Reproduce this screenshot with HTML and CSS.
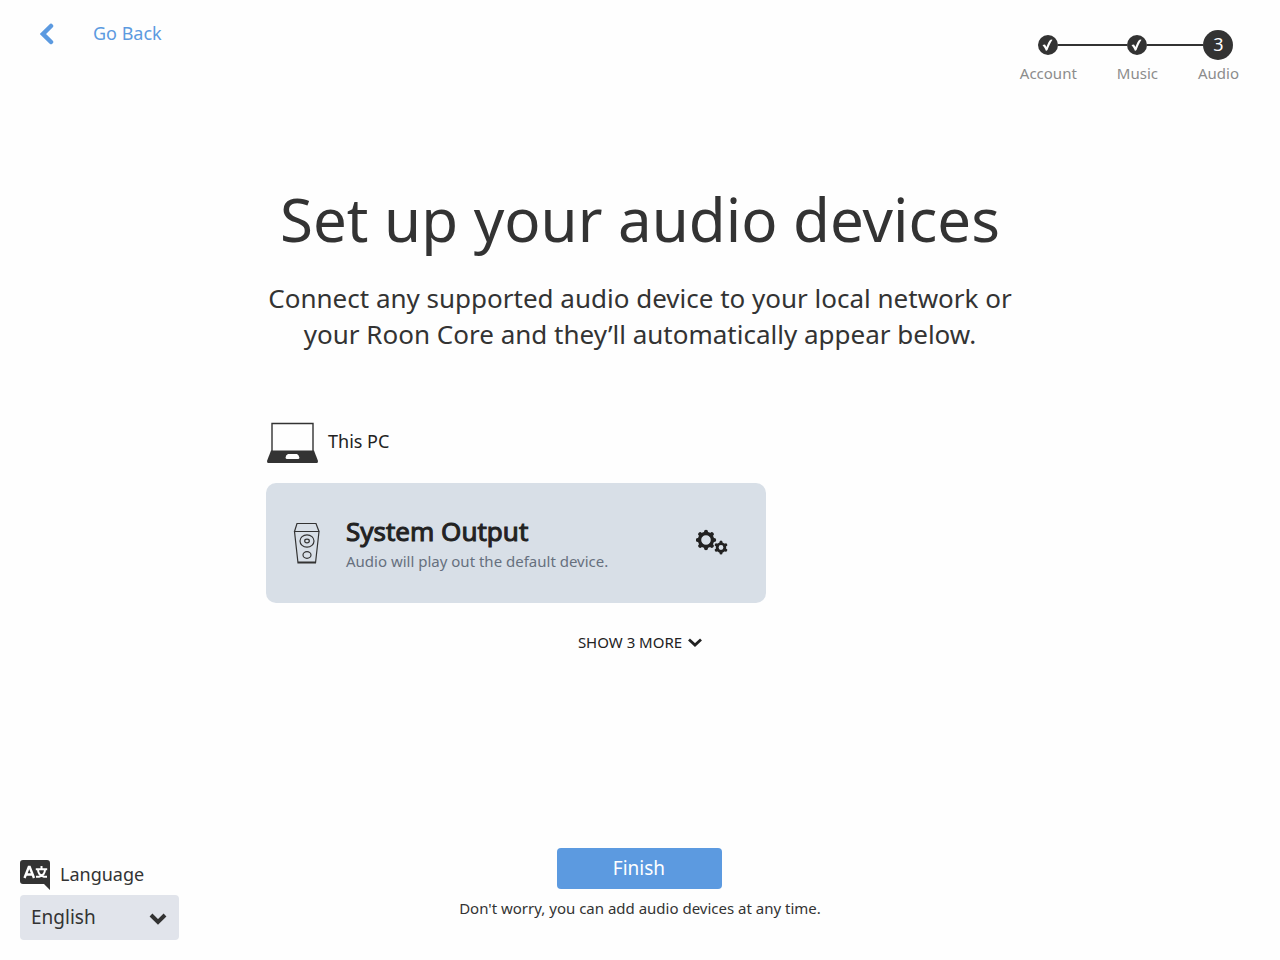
FILE: index.html
```html
<!DOCTYPE html>
<html lang="en">
<head>
<meta charset="utf-8">
<meta name="viewport" content="width=device-width, initial-scale=1">
<title>Set up your audio devices</title>
<link rel="stylesheet" href="styles.css">
</head>
<body>
<header class="topbar">
  <a class="back" href="#">
    <svg class="back-icon" width="14" height="24" viewBox="0 0 14 24" aria-hidden="true"><path d="M11 5 3 13l8 8" fill="none" stroke="currentColor" stroke-width="4.500" stroke-linecap="round"/></svg>
    <span>Go Back</span>
  </a>
  <ol class="steps">
    <li class="step">
      <span class="marker"><span class="dot"><svg width="20" height="20" viewBox="0 0 20 20" aria-hidden="true"><path d="M4.500 10 7 9.500 8.500 12C9.800 8.500 11 5.500 13 4.500l1.500.2C12.500 7.500 11 11 9.500 15L8 16C7 13.500 6 12 4.500 10z" fill="#fff"/></svg></span></span>
      <span>Account</span>
    </li>
    <li class="step">
      <span class="marker"><span class="dot"><svg width="20" height="20" viewBox="0 0 20 20" aria-hidden="true"><path d="M4.500 10 7 9.500 8.500 12C9.800 8.500 11 5.500 13 4.500l1.500.2C12.500 7.500 11 11 9.500 15L8 16C7 13.500 6 12 4.500 10z" fill="#fff"/></svg></span></span>
      <span>Music</span>
    </li>
    <li class="step" aria-current="step">
      <span class="marker"><span class="dot dot-current">3</span></span>
      <span>Audio</span>
    </li>
  </ol>
</header>

<main class="content">
  <h1 class="title">Set up your audio devices</h1>
  <p class="lead">Connect any supported audio device to your local network or your Roon Core and they’ll automatically appear below.</p>

  <section class="group">
    <h2 class="group-title">
      <svg width="52" height="42" viewBox="0 0 52 42" aria-hidden="true"><path d="M6 30V2.500h41V30" fill="none" stroke="#333" stroke-width="1.400"/><path d="M5 29.500h43L52 40q0 2-1 2H2q-1 0-1-2z" fill="#333"/><path d="M22 33h9q2 1 2.500 4l-1 1H20.500l-1-1q0-3 2.500-4z" fill="#fff"/></svg>
      <span>This PC</span>
    </h2>
    <article class="device">
      <svg width="28" height="42" viewBox="0 0 28 42" fill="none" stroke="#333" stroke-width="1.200" aria-hidden="true"><path d="M4 1.500h19l3 8H1.500zM1.500 9.500 5 41h17.500L26 9.500M5 40h17.500"/><ellipse cx="14" cy="19" rx="7" ry="6.200"/><ellipse cx="14" cy="19" rx="2.300" ry="1.800"/><ellipse cx="14" cy="33" rx="4" ry="3.400"/></svg>
      <div class="device-text">
        <h3 class="device-name">System Output</h3>
        <p class="device-note">Audio will play out the default device.</p>
      </div>
      <button class="icon-button" type="button" aria-label="Device settings">
        <svg width="32" height="28" viewBox="0 0 32 28" fill="none" stroke="#222" stroke-linecap="round" aria-hidden="true">
          <circle cx="10" cy="11" r="6.500" stroke-width="3.400"/>
          <path d="M10 4V2.800M10 18v1.200M3 11H1.800M17 11h1.200M5 6 4.200 5.200M15 16l.8.8M5 16l-.8.8M15 6l.8-.8" stroke-width="4"/>
          <circle cx="25" cy="18.500" r="3.800" stroke-width="2.800"/>
          <path d="M25 14v-1M25 23v1M21 16.200l-.8-.4M29 16.200l.8-.4M21 20.800l-.8.4M29 20.800l.8.4" stroke-width="3"/>
        </svg>
      </button>
    </article>
  </section>

  <button class="more" type="button">
    <span>SHOW 3 MORE</span>
    <svg width="14" height="10" viewBox="0 0 14 10" aria-hidden="true"><path d="m1 2.500 6 5.500 6-5.500" fill="none" stroke="#222" stroke-width="2.800"/></svg>
  </button>
</main>

<footer class="footer">
  <div class="language">
    <label class="language-label" for="language">
      <svg width="30" height="30" viewBox="0 0 30 30" aria-hidden="true"><path d="M3 0h24q3 0 3 3v27l-6-6H3q-3 0-3-3V3q0-3 3-3z" fill="#333"/><path d="M4.500 18 8.800 7h.9L14 18M6 14.500h6.500" fill="none" stroke="#fff" stroke-width="2.400"/><path d="M15.800 9.300h11.400M21.500 6v3M18 9.500c0 3 1.500 6 6 7.300h3M25 9.500c0 3-1.500 6-6 7.300h-3" fill="none" stroke="#fff" stroke-width="2"/></svg>
      <span>Language</span>
    </label>
    <div class="select-wrap">
      <select class="select" id="language"><option>English</option></select>
      <svg class="select-icon" width="18" height="12" viewBox="0 0 18 12" aria-hidden="true"><path d="m2 2 7 7 7-7" fill="none" stroke="#333" stroke-width="4"/></svg>
    </div>
  </div>
  <div class="finish">
    <button class="primary" type="button">Finish</button>
    <p class="finish-note">Don't worry, you can add audio devices at any time.</p>
  </div>
</footer>
</body>
</html>
```

FILE: styles.css
```css
* { box-sizing: border-box; }

body {
  margin: 0;
  min-height: 100vh;
  display: flex;
  flex-direction: column;
  background: #fefefe;
  color: #333;
  font-family: "Noto Sans", "Open Sans", sans-serif;
}

h1, h2, h3, p, ol { margin: 0; padding: 0; font-weight: 400; }
svg { display: block; flex: none; }
button, select { font: inherit; color: inherit; border: 0; cursor: pointer; }

.topbar {
  display: flex;
  justify-content: space-between;
  align-items: flex-start;
  padding: 20px 21px 0 40px;
}

.back {
  display: flex;
  align-items: center;
  gap: 39px;
  color: #5c9ae0;
  font-size: 18px;
  line-height: 26px;
  text-decoration: none;
}

.steps {
  display: flex;
  list-style: none;
  padding-top: 10px;
}

.step {
  padding: 0 20px;
  color: #8c8c8c;
  font-size: 15px;
  line-height: 20px;
  text-align: center;
}

.marker {
  display: flex;
  align-items: center;
  height: 30px;
  margin: 0 -20px 3px;
}

.marker::before,
.marker::after {
  content: "";
  flex: 1;
  height: 2px;
  background: #333;
}

.step:first-child .marker::before,
.step:last-child .marker::after { background: none; }

.dot {
  width: 20px;
  height: 20px;
  border-radius: 50%;
  background: #333;
}

.dot-current {
  width: 30px;
  height: 30px;
  color: #fff;
  font-size: 18px;
  line-height: 28px;
}

.content {
  flex: 1;
  width: 100%;
  max-width: 788px;
  margin: 0 auto;
  padding: 95px 20px 40px;
}

.title {
  font-size: 60px;
  line-height: 82px;
  text-align: center;
}

.lead {
  margin-top: 20px;
  font-size: 26px;
  line-height: 36px;
  text-align: center;
}

.group {
  max-width: 500px;
  margin-top: 69px;
}

.group-title {
  display: flex;
  align-items: center;
  gap: 10px;
  color: #222;
  font-size: 18px;
  line-height: 24px;
}

.group-title span { padding-bottom: 3px; }

.device {
  display: flex;
  align-items: center;
  gap: 25px;
  min-height: 120px;
  margin-top: 20px;
  padding: 0 38px 0 27px;
  border-radius: 10px;
  background: #d8dfe7;
}

.device-text { flex: 1; }

.device-name {
  color: #222;
  font-size: 26px;
  line-height: 36px;
  -webkit-text-stroke: 1px #222;
}

.device-note {
  color: #66707e;
  font-size: 15px;
  line-height: 24px;
}

.icon-button {
  padding: 0;
  background: none;
}

.more {
  display: flex;
  align-items: center;
  gap: 6px;
  margin: 29px auto 0;
  padding: 0;
  background: none;
  color: #222;
  font-size: 15px;
  line-height: 20px;
}

.footer {
  display: grid;
  grid-template-columns: 1fr auto 1fr;
  align-items: end;
  padding: 0 20px 20px;
}

.language { width: 159px; }

.language-label {
  display: flex;
  align-items: center;
  gap: 10px;
  margin-bottom: 5px;
  font-size: 18px;
  line-height: 24px;
}

.language-label span { padding-bottom: 2px; }

.select-wrap { position: relative; }

.select {
  appearance: none;
  display: block;
  width: 100%;
  height: 45px;
  padding: 0 40px 2px 11px;
  border-radius: 4px;
  background: #e1e4eb;
  font-size: 19px;
}

.select-icon {
  position: absolute;
  right: 12px;
  top: 18px;
  pointer-events: none;
}

.finish {
  display: flex;
  flex-direction: column;
  align-items: center;
  gap: 9px;
  padding-bottom: 22px;
}

.primary {
  width: 165px;
  height: 41px;
  padding: 0 2px 2px 0;
  border-radius: 4px;
  background: #5c9ae0;
  color: #fff;
  font-size: 19px;
}

.finish-note {
  font-size: 15px;
  line-height: 20px;
}
```
